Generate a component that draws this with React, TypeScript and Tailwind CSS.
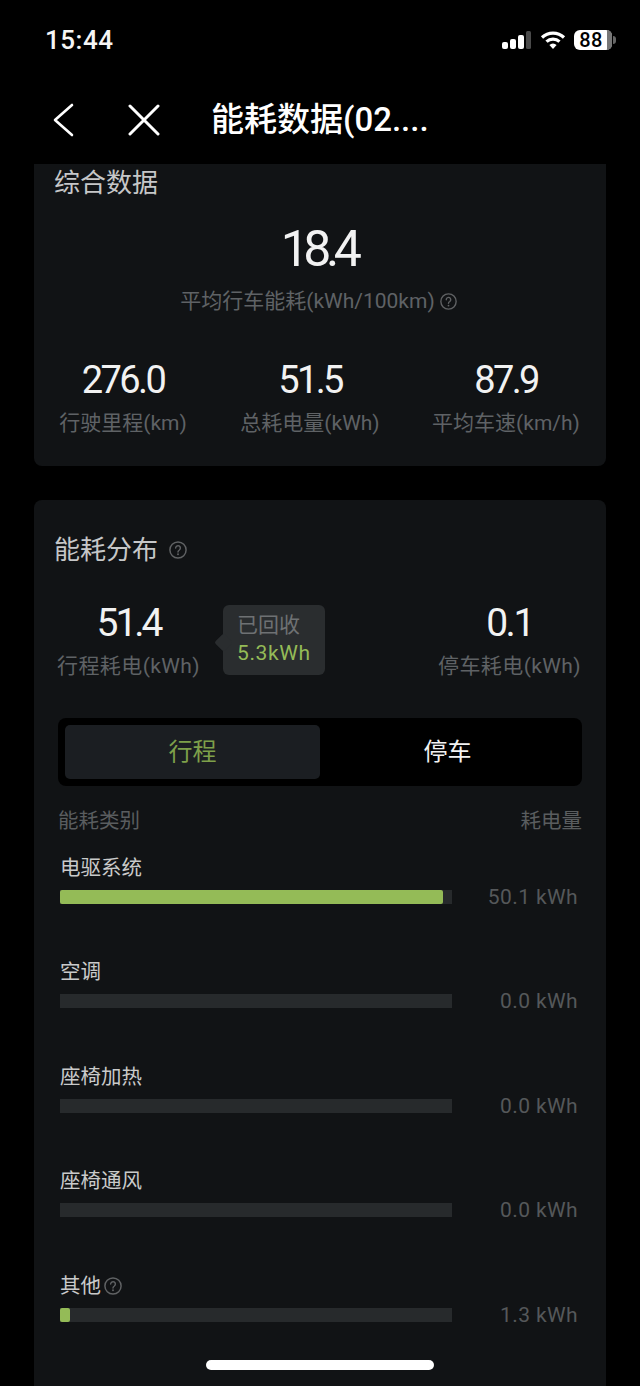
import React from 'react';

const fontStack = "font-['Roboto','Noto_Sans_CJK_SC',sans-serif]";

const HelpIcon = ({ className }: { className: string }) => (
  <svg viewBox="0 0 16 16" fill="none" className={className}>
    <circle cx="8" cy="8" r="7.2" stroke="currentColor" strokeWidth="1.3" />
    <path d="M5.9 6.3a2.1 2.1 0 1 1 3.3 1.7c-.8.5-1.2.9-1.2 1.7" stroke="currentColor" strokeWidth="1.3" strokeLinecap="round" />
    <circle cx="8" cy="11.8" r=".85" fill="currentColor" />
  </svg>
);

const StatusIcons = () => (
  <div className="flex items-center">
    <svg width="29" height="18" viewBox="0 0 29 18">
      <rect x="0" y="11" width="6" height="7" rx="2" fill="#fff" />
      <rect x="8" y="8" width="6" height="10" rx="2" fill="#fff" />
      <rect x="16" y="4" width="6" height="14" rx="2" fill="#fff" />
      <rect x="24" y="0" width="5" height="18" rx="1.5" fill="#4a4a4a" />
    </svg>
    <svg width="26" height="20" viewBox="0 0 26 20" fill="none" stroke="#fff" strokeWidth="3.2" className="ml-[9px]">
      <path d="M2 7.5a16 16 0 0 1 22 0" />
      <path d="M6.5 11.6a9.5 9.5 0 0 1 13 0" />
      <path d="M13 19l-3.6-4a5 5 0 0 1 7.2 0z" fill="#fff" stroke="none" />
    </svg>
    <div className="ml-[8px] flex items-center">
      <div className="relative flex h-5 w-[38px] items-center rounded-[6px] bg-white">
        <div className="absolute inset-y-0 right-0 w-[5px] rounded-r-[6px] bg-[#777]" />
        <span className="relative w-[34px] text-center text-[20px] leading-5 font-medium tracking-[0.5px] text-black">88</span>
      </div>
      <div className="ml-[1px] h-[8px] w-[3px] rounded-r-sm bg-[#666]" />
    </div>
  </div>
);

const Stat = ({ value, label }: { value: string; label: string }) => (
  <div className="flex flex-col items-center">
    <span className="text-[38px] leading-[42px] tracking-[-2.6px] text-[#f2f2f2]">{value}</span>
    <span className="mt-[8px] text-[21px] leading-7 whitespace-nowrap text-[#5f6265]">{label}</span>
  </div>
);

const rows = [
  { name: '电驱系统', value: '50.1 kWh', pct: 'w-[383px]', help: false },
  { name: '空调', value: '0.0 kWh', pct: 'w-0', help: false },
  { name: '座椅加热', value: '0.0 kWh', pct: 'w-0', help: false },
  { name: '座椅通风', value: '0.0 kWh', pct: 'w-0', help: false },
  { name: '其他', value: '1.3 kWh', pct: 'w-[10px]', help: true },
];

const EnergyRow = ({ name, value, pct, help }: (typeof rows)[number]) => (
  <div className="h-[104.4px]">
    <div className="flex h-7 items-center gap-[3px] pl-[2px] text-[20.5px] leading-7 text-[#c9caca]">
      {name}
      {help && <HelpIcon className="size-[18px] text-[#606264]" />}
    </div>
    <div className="mt-[8px] flex items-center justify-between pr-[4px] pl-[2px]">
      <div className="h-[14px] w-[392px] bg-[#272a2c]">
        <div className={`h-full rounded-[2px] bg-[#94bb57] ${pct}`} />
      </div>
      <span className="text-[21px] leading-[14px] tracking-[0.4px] text-[#55585a]">{value}</span>
    </div>
  </div>
);

export default function App() {
  return (
    <div className={`relative h-[1386px] w-[640px] overflow-hidden bg-black ${fontStack}`}>
      {/* Status bar */}
      <div className="flex h-[80px] items-start justify-between pt-[25px] pr-[24px] pl-[45px]">
        <span className="text-[26px] leading-[30px] font-medium tracking-[0.5px] text-[#f5f5f5]">15:44</span>
        <div className="pt-[5px]">
          <StatusIcons />
        </div>
      </div>

      {/* Nav */}
      <div className="flex h-[84px] items-center pb-[4px] pl-[52px]">
        <svg width="22" height="34" viewBox="0 0 22 34" fill="none" stroke="#fff" strokeWidth="2.6" strokeLinecap="round" strokeLinejoin="round">
          <path d="M20 2 3 17l17 15" />
        </svg>
        <svg width="32" height="32" viewBox="0 0 32 32" fill="none" stroke="#fff" strokeWidth="3" strokeLinecap="round" className="ml-[54px]">
          <path d="M2 2l28 28M30 2 2 30" />
        </svg>
        <span className="ml-[51px] text-[33px] leading-10 font-medium text-white">能耗数据(02....</span>
      </div>

      {/* Summary card */}
      <div className="mx-[34px] h-[302px] rounded-b-[8px] bg-[#111315]">
        <div className="-ml-[1px] pl-[21px] text-[26px] leading-[38px] text-[#c6c7c8]">综合数据</div>
        <div className="mt-[22px] pr-[3px] text-center text-[50px] leading-[50px] tracking-[-5.5px] text-[#f2f2f2]">18.4</div>
        <div className="mt-[13px] flex items-center justify-center gap-[5px] pr-[3px] text-[21px] leading-7 text-[#5f6265]">
          平均行车能耗(kWh/100km)
          <HelpIcon className="size-[17px] text-[#606264]" />
        </div>
        <div className="mt-[44px] grid grid-cols-[178px_196px_196px]">
          <Stat value="276.0" label="行驶里程(km)" />
          <Stat value="51.5" label="总耗电量(kWh)" />
          <Stat value="87.9" label="平均车速(km/h)" />
        </div>
      </div>

      {/* Distribution card */}
      <div className="mx-[34px] mt-[34px] h-[900px] rounded-[8px] bg-[#111315] px-[24px]">
        <div className="flex items-center gap-[11px] pt-[32px] text-[26px] leading-[36px] text-[#c6c7c8]">
          <span className="-ml-[4px]">能耗分布</span>
          <HelpIcon className="size-[18px] text-[#606264]" />
        </div>

        <div className="mt-[33px] flex h-[89px] items-start">
          <div className="flex w-[141px] flex-col items-center">
            <span className="text-[39px] leading-[44px] tracking-[-3px] text-[#f2f2f2]">51.4</span>
            <span className="mt-[7px] text-[21px] leading-7 tracking-[0.4px] whitespace-nowrap text-[#5f6265]">行程耗电(kWh)</span>
          </div>
          <div className="relative mt-[4px] ml-[24px] h-[70px] w-[102px] rounded-[6px] bg-[#2a2d2f] pt-[6px] pl-[14px]">
            <div className="absolute top-[31px] -left-[6px] size-[13px] rotate-45 rounded-[2px] bg-[#2a2d2f]" />
            <div className="relative text-[21px] leading-7 text-[#6e7173]">已回收</div>
            <div className="relative text-[21px] leading-7 tracking-[0.6px] text-[#94bb57]">5.3kWh</div>
          </div>
          <div className="ml-auto flex w-[141px] -translate-x-[2px] flex-col items-center">
            <span className="text-[39px] leading-[44px] tracking-[-2.5px] text-[#f2f2f2]">0.1</span>
            <span className="mt-[7px] text-[21px] leading-7 tracking-[0.4px] whitespace-nowrap text-[#5f6265]">停车耗电(kWh)</span>
          </div>
        </div>

        <div className="mt-[28px] flex h-[68px] rounded-[8px] bg-black p-[7px]">
          <div className="flex w-[255px] items-center justify-center rounded-[5px] bg-[#1b1e22] text-[24px] text-[#7ea04a]">行程</div>
          <div className="flex flex-1 items-center justify-center text-[24px] text-[#f2f2f2]">停车</div>
        </div>

        <div className="mt-[21px] flex justify-between text-[20.5px] leading-7 text-[#5a5d5f]">
          <span>能耗类别</span>
          <span>耗电量</span>
        </div>

        <div className="mt-[19px]">
          {rows.map(row => (
            <EnergyRow key={row.name} {...row} />
          ))}
        </div>
      </div>

      {/* Home indicator */}
      <div className="absolute bottom-[16px] left-[206px] h-[10px] w-[228px] rounded-full bg-white" />
    </div>
  );
}
